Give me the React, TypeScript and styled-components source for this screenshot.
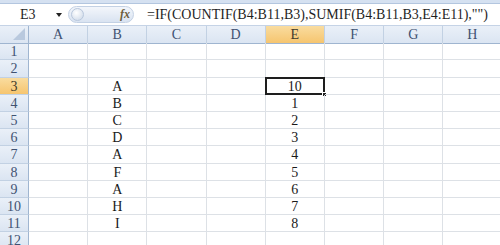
import React from 'react';
import styled, { createGlobalStyle, css } from 'styled-components';

const GlobalStyle = createGlobalStyle`
  html, body {
    margin: 0;
    padding: 0;
    background: #ffffff;
    overflow: hidden;
  }
  body {
    font-family: "Liberation Serif", "Noto Sans CJK SC", serif;
  }
`;

const Sheet = styled.div`
  width: 500px;
  height: 245px;
  overflow: hidden;
  display: flex;
  flex-direction: column;
  & > * {
    flex-shrink: 0;
  }
`;

const RibbonEdge = styled.div`
  height: 3px;
  background: #d5e1f1;
  border-bottom: 1px solid #b3c6df;
`;

const FormulaBar = styled.div`
  height: 21px;
  display: flex;
  align-items: center;
  background: #ffffff;
  border-bottom: 1px solid #c5d3e6;
`;

const NameBox = styled.div`
  width: 68px;
  height: 100%;
  display: flex;
  align-items: center;
  justify-content: space-between;
  padding: 1px 6px 0 20px;
  box-sizing: border-box;
  font-size: 14px;
  color: #1f1f1f;
`;

const DropArrow = styled.span`
  width: 0;
  height: 0;
  border-left: 3px solid transparent;
  border-right: 3px solid transparent;
  border-top: 4px solid #222;
`;

const FxPill = styled.div`
  width: 66px;
  height: 17px;
  margin-right: 12px;
  display: flex;
  align-items: center;
  justify-content: space-between;
  padding: 0 3px 0 2px;
  box-sizing: border-box;
  border-radius: 9px;
  background: linear-gradient(#f3f6fb, #d9e3f1);
  border: 1px solid #c3d1e4;
`;

const Knob = styled.span`
  width: 13px;
  height: 13px;
  border-radius: 50%;
  background: radial-gradient(circle at 40% 35%, #ffffff, #c9d5e6);
  border: 1px solid #b8c7dc;
  box-sizing: border-box;
`;

const FxLabel = styled.span`
  font-style: italic;
  font-weight: bold;
  font-size: 12px;
  color: #6d5d3b;
`;

const FormulaText = styled.div`
  flex: 1;
  height: 100%;
  display: flex;
  align-items: center;
  padding: 1px 0 0 1px;
  box-sizing: border-box;
  font-size: 14px;
  color: #1f1f1f;
  white-space: nowrap;
  overflow: hidden;
`;

const Grid = styled.div`
  display: grid;
  grid-template-columns: 29px repeat(8, 59.2px);
  grid-auto-rows: 17.2px;
`;

const headerBg = css`
  background: linear-gradient(#eaf0f8, #dbe5f2);
  color: #3f5272;
`;

const activeBg = css`
  background: linear-gradient(#f9dc9f, #f6c56f);
  color: #3f3a2a;
`;

const Corner = styled.div`
  ${headerBg};
  height: 18px;
  border-right: 1px solid #9fb5d0;
  border-bottom: 1px solid #9fb5d0;
  box-sizing: border-box;
  position: relative;
  &::after {
    content: '';
    position: absolute;
    right: 3px;
    bottom: 3px;
    border-left: 12px solid transparent;
    border-bottom: 12px solid #b9c9de;
  }
`;

const ColHead = styled.div<{ $active?: boolean }>`
  ${(p) => (p.$active ? activeBg : headerBg)};
  height: 18px;
  display: flex;
  align-items: center;
  justify-content: center;
  padding-top: 1px;
  font-size: 14px;
  border-right: 1px solid #c2d1e3;
  border-bottom: 1px solid #9fb5d0;
  box-sizing: border-box;
`;

const RowHead = styled.div<{ $active?: boolean }>`
  ${(p) => (p.$active ? activeBg : headerBg)};
  display: flex;
  align-items: center;
  justify-content: center;
  padding-top: 2px;
  font-size: 14px;
  border-right: 1px solid #9fb5d0;
  border-bottom: 1px solid #c2d1e3;
  box-sizing: border-box;
`;

const Cell = styled.div<{ $selected?: boolean }>`
  display: flex;
  align-items: center;
  justify-content: center;
  padding-top: 2px;
  font-size: 14px;
  color: #1a1a1a;
  border-right: 1px solid #dde1e6;
  border-bottom: 1px solid #dde1e6;
  box-sizing: border-box;
  position: relative;
  ${(p) =>
    p.$selected &&
    css`
      &::before {
        content: '';
        position: absolute;
        left: -1px;
        top: -1px;
        right: -1px;
        bottom: -1px;
        border: 2px solid #1e1e1e;
      }
      &::after {
        content: '';
        position: absolute;
        right: -3px;
        bottom: -3px;
        width: 5px;
        height: 5px;
        background: #1e1e1e;
        border: 1px solid #fff;
        box-sizing: border-box;
      }
    `}
`;

const cols = ['A', 'B', 'C', 'D', 'E', 'F', 'G', 'H'];
const letters = ['', '', 'A', 'B', 'C', 'D', 'A', 'F', 'A', 'H', 'I', ''];
const values = ['', '', '10', '1', '2', '3', '4', '5', '6', '7', '8', ''];

const App: React.FC = () => {
  return (
    <Sheet>
      <GlobalStyle />
      <RibbonEdge />
      <FormulaBar>
        <NameBox>
          E3
          <DropArrow />
        </NameBox>
        <FxPill>
          <Knob />
          <FxLabel>fx</FxLabel>
        </FxPill>
        <FormulaText>=IF(COUNTIF(B4:B11,B3),SUMIF(B4:B11,B3,E4:E11),"")</FormulaText>
      </FormulaBar>
      <Grid>
        <Corner />
        {cols.map((c) => (
          <ColHead key={c} $active={c === 'E'}>
            {c}
          </ColHead>
        ))}
        {letters.map((letter, i) => (
          <React.Fragment key={i}>
            <RowHead $active={i === 2}>{i + 1}</RowHead>
            {cols.map((c) => (
              <Cell key={c} $selected={c === 'E' && i === 2}>
                {c === 'B' ? letter : c === 'E' ? values[i] : ''}
              </Cell>
            ))}
          </React.Fragment>
        ))}
      </Grid>
    </Sheet>
  );
};

export default App;
